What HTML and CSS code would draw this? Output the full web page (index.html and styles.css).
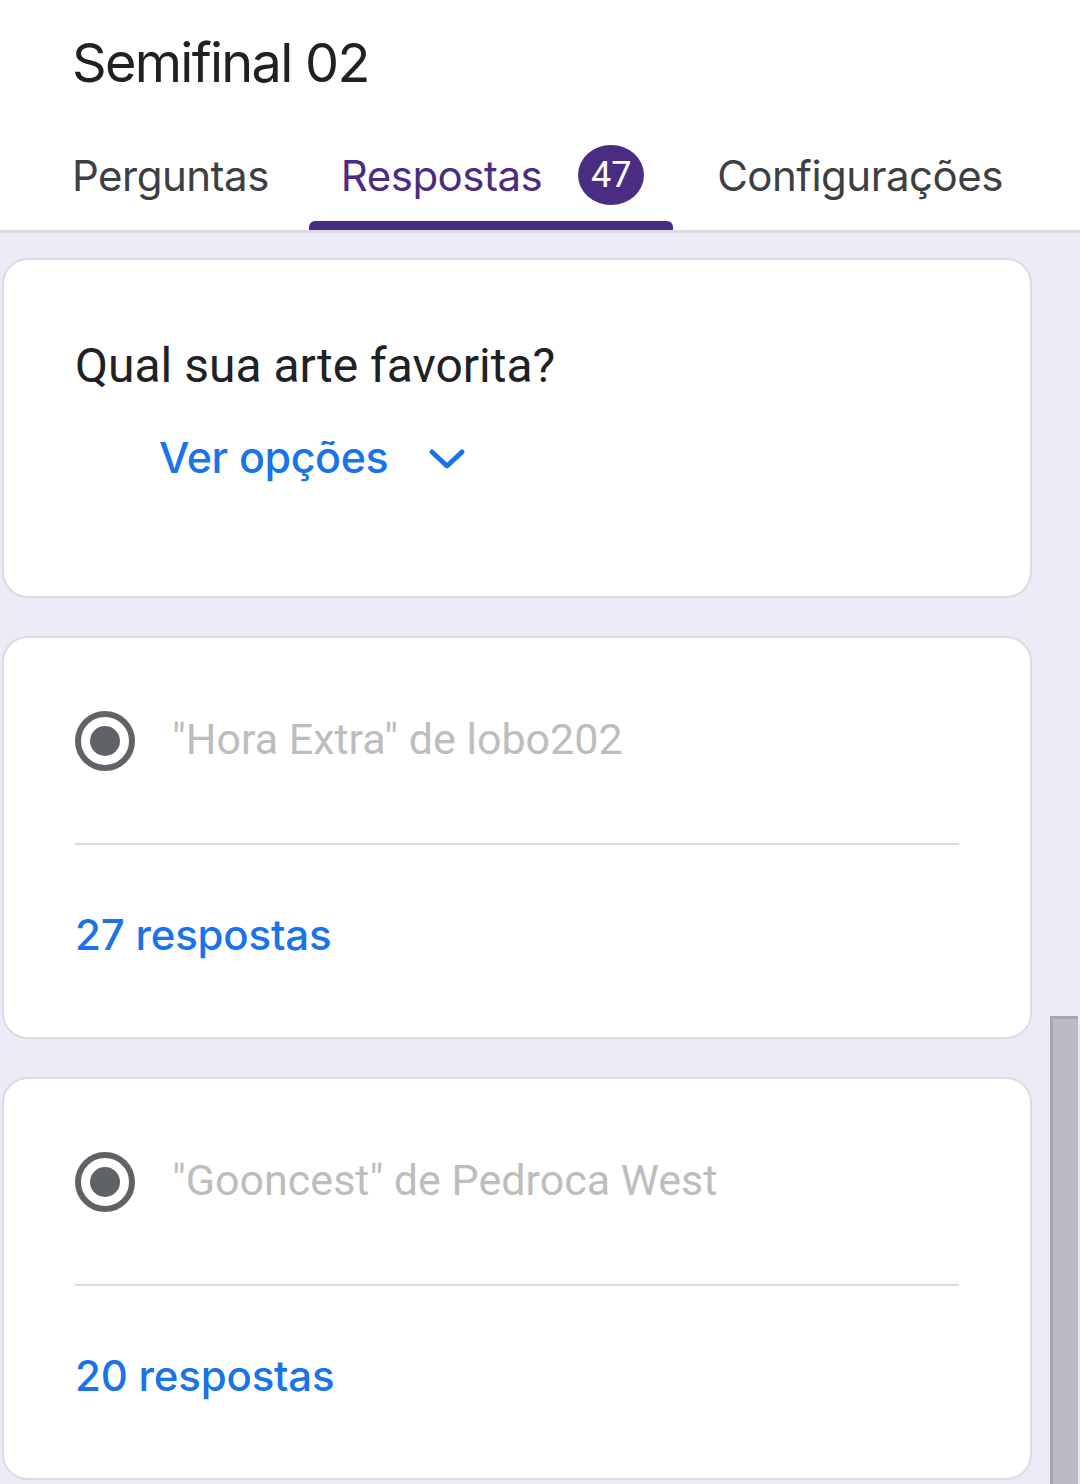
FILE: index.html
```html
<!DOCTYPE html>
<html lang="pt">
<head>
<meta charset="utf-8">
<title>Semifinal 02</title>
<link rel="stylesheet" href="styles.css">
</head>
<body>
<div class="app">
  <header class="top">
    <h1 class="title">Semifinal 02</h1>
    <nav class="tabs">
      <div class="tab tab-first">Perguntas</div>
      <div class="tab active"><span>Respostas</span><span class="badge">47</span></div>
      <div class="tab tab-last">Configurações</div>
    </nav>
  </header>
  <main class="content">
    <section class="card q-card">
      <h2 class="question">Qual sua arte favorita?</h2>
      <div class="toggle">
        <span>Ver opções</span>
        <svg class="chev" width="38" height="24" viewBox="0 0 38 24"><path d="M4 5 L19 19 L34 5" fill="none" stroke="#1a73e8" stroke-width="5" stroke-linecap="round" stroke-linejoin="round"/></svg>
      </div>
    </section>
    <section class="card opt-card">
      <div class="option">
        <span class="radio"><span class="dot"></span></span>
        <span class="opt-label">"Hora Extra" de lobo202</span>
      </div>
      <div class="divider"></div>
      <div class="count">27 respostas</div>
    </section>
    <section class="card opt-card">
      <div class="option">
        <span class="radio"><span class="dot"></span></span>
        <span class="opt-label">"Gooncest" de Pedroca West</span>
      </div>
      <div class="divider"></div>
      <div class="count">20 respostas</div>
    </section>
  </main>
  <div class="scrollbar"></div>
</div>
</body>
</html>
```

FILE: styles.css
```css
* { box-sizing: border-box; }
html, body { margin: 0; padding: 0; }
body {
  width: 1080px;
  height: 1484px;
  overflow: hidden;
  background: #ede9f7;
  font-family: "Inter", "Roboto", sans-serif;
}
.app { position: relative; height: 1484px; }

.top {
  background: #ffffff;
  border-bottom: 3px solid #dcdae0;
}
.title {
  margin: 0;
  padding: 28px 0 0 72px;
  height: 130px;
  font-family: "Inter", sans-serif;
  font-weight: 400;
  font-size: 54px;
  line-height: 70px;
  color: #202124;
  letter-spacing: -1.7px;
}
.tabs {
  display: flex;
  height: 100px;
  padding-left: 40px;
}
.tab {
  display: flex;
  align-items: center;
  padding: 0 32px 10px;
  font-size: 42px;
  color: #3c4043;
  letter-spacing: -0.5px;
}
.tab.active {
  position: relative;
  margin-left: 8px;
  color: #4a2c82;
  padding-right: 29px;
}
.tab-last { margin-left: 12px; }
.tab.active::after {
  content: "";
  position: absolute;
  left: 0; right: 0; bottom: 0;
  height: 9px;
  background: #4a2c82;
  border-radius: 6px 6px 0 0;
}
.badge {
  margin-left: 36px;
  width: 66px;
  height: 60px;
  border-radius: 50%;
  background: #4a2c82;
  color: #ffffff;
  font-family: "Roboto", sans-serif;
  font-size: 36px;
  display: flex;
  align-items: center;
  justify-content: center;
  letter-spacing: 0;
}

.content {
  display: flex;
  flex-direction: column;
  gap: 38px;
  padding: 25px 0 0 2px;
  width: 1032px;
}
.card {
  background: #ffffff;
  border: 2px solid #dadce0;
  border-radius: 26px;
  padding: 0 71px;
}
.q-card { height: 340px; padding-top: 78px; }
.question {
  margin: 0;
  font-family: "Roboto", sans-serif;
  font-weight: 400;
  font-size: 48px;
  line-height: 56px;
  color: #202124;
}
.toggle {
  display: flex;
  align-items: center;
  margin: 35px 0 0 84px;
  font-size: 43px;
  line-height: 56px;
  font-weight: 500;
  color: #1a73e8;
  letter-spacing: -0.4px;
}
.chev { margin-left: 40px; margin-top: 4px; }

.opt-card { height: 403px; padding-top: 73px; }
.option {
  display: flex;
  align-items: center;
  height: 60px;
}
.radio {
  width: 60px;
  height: 60px;
  border: 6px solid #5f6368;
  border-radius: 50%;
  display: flex;
  align-items: center;
  justify-content: center;
  flex: none;
}
.dot {
  width: 30px;
  height: 30px;
  border-radius: 50%;
  background: #5f6368;
}
.opt-label {
  margin-left: 37px;
  margin-bottom: 4px;
  font-family: "Roboto", sans-serif;
  font-size: 43px;
  color: #bdbdbd;
}
.divider {
  margin-top: 72px;
  height: 2px;
  background: #dadce0;
}
.count {
  margin-top: 62px;
  font-size: 42px;
  line-height: 56px;
  font-weight: 500;
  color: #1a73e8;
  letter-spacing: -0.2px;
}

.scrollbar {
  position: absolute;
  left: 1050px;
  top: 1016px;
  width: 28px;
  height: 468px;
  background: #bdbac6;
  border-left: 3px solid #a9a6b3;
  border-top: 3px solid #a9a6b3;
}
```
